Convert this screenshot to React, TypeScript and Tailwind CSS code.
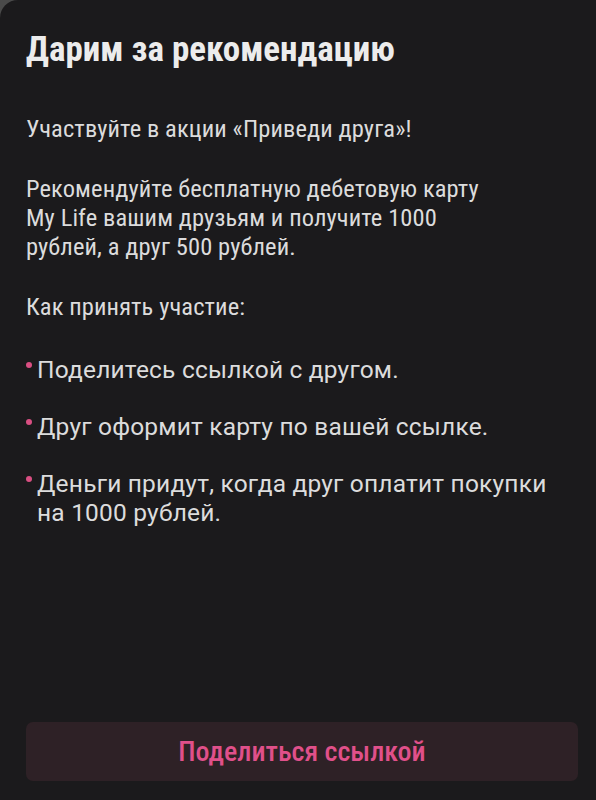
import React from 'react';

const steps = [
  'Поделитесь ссылкой с другом.',
  'Друг оформит карту по вашей ссылке.',
  'Деньги придут, когда друг оплатит покупки на 1000 рублей.',
];

export default function App() {
  return (
    <div className="w-[596px] h-[800px] bg-[#4a4a4a] overflow-hidden font-['Roboto'] font-stretch-condensed">
      <div className="w-full h-full bg-[#1b1a1c] rounded-tl-[18px] flex flex-col px-[26px]">
        <h1 className="mt-[30px] text-[35px] leading-[40px] font-bold text-[#ececec]">
          Дарим за рекомендацию
        </h1>

        <div className="mt-[44px] text-[24.5px] leading-[29px] tracking-[0.1px] text-[#dcdcdc]">
          <p>Участвуйте в акции «Приведи друга»!</p>
          <p className="mt-[31px] pr-[70px]">
            Рекомендуйте бесплатную дебетовую карту My Life вашим друзьям и получите 1000 рублей, а друг 500 рублей.
          </p>
          <p className="mt-[31px]">Как принять участие:</p>

          <ul className="mt-[34px] flex flex-col gap-[28px] font-stretch-normal tracking-[0.2px]">
            {steps.map((s) => (
              <li key={s} className="relative pl-[11px] pr-[10px]">
                <span className="absolute left-0 top-[7px] w-[6px] h-[6px] rounded-full bg-[#d94f82]" />
                {s}
              </li>
            ))}
          </ul>
        </div>

        <div className="flex-1" />

        <button className="mb-[19px] h-[59px] w-[552px] rounded-[7px] bg-[#2e2126] text-[28px] font-medium text-[#e0508a]">
          Поделиться ссылкой
        </button>
      </div>
    </div>
  );
}
